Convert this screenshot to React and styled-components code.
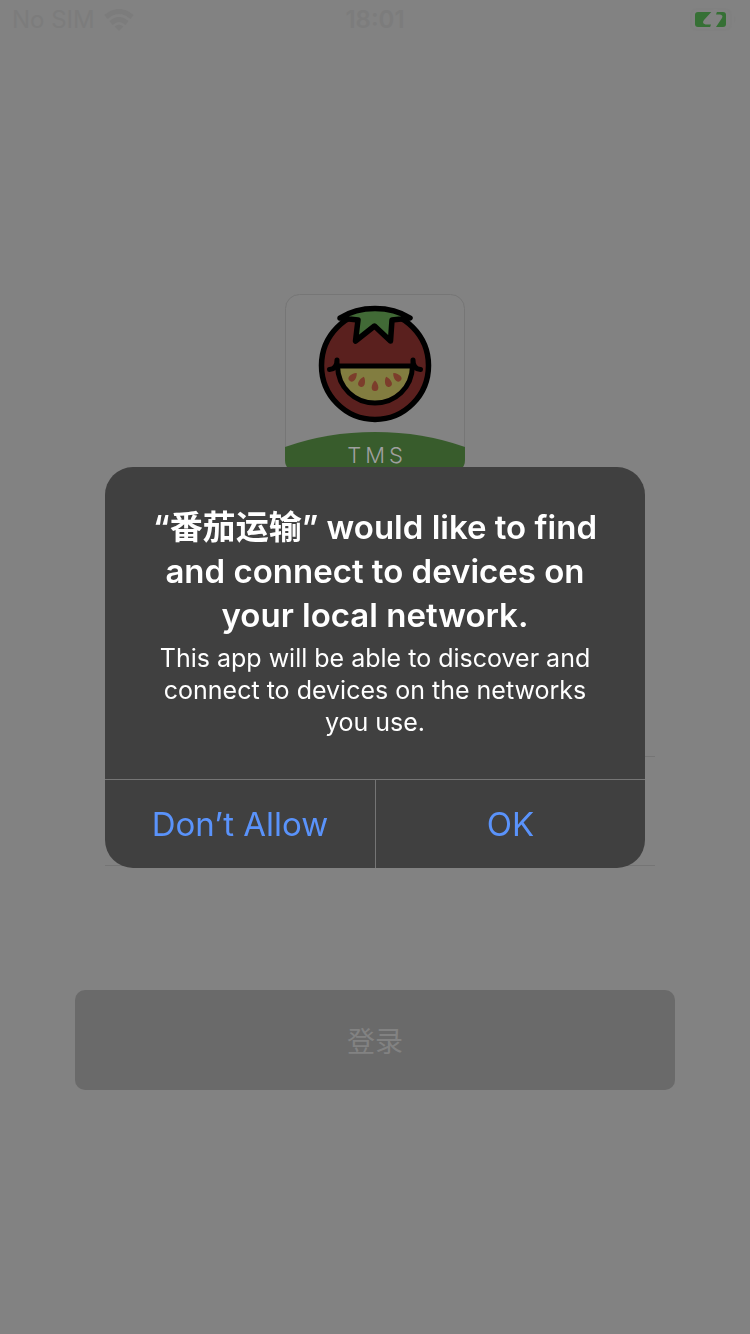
import React from "react";
import styled, { createGlobalStyle } from "styled-components";

const GlobalStyle = createGlobalStyle`
  *, *::before, *::after { box-sizing: border-box; }
  body {
    margin: 0;
    background: #828282;
    font-family: Inter, "Noto Sans CJK SC", sans-serif;
  }
`;

const Page = styled.div`
  min-height: 100vh;
  display: flex;
  flex-direction: column;
`;

const StatusBar = styled.header`
  display: grid;
  grid-template-columns: 1fr auto 1fr;
  align-items: center;
  height: 40px;
  padding: 0 12px;
  font-size: 24px;
  line-height: 40px;
  color: #7c7c7c;
`;

const Carrier = styled.div`
  display: flex;
  align-items: center;
  gap: 9px;
`;

const Clock = styled.time`
  font-weight: 600;
`;

const BatteryIcon = styled.svg`
  justify-self: end;
`;

const LoginScreen = styled.main`
  display: flex;
  flex-direction: column;
  align-items: center;
  padding: 254px 75px 0;
`;

const Logo = styled.svg`
  display: block;
  width: 180px;
  height: 180px;
`;

const LoginForm = styled.form`
  display: flex;
  flex-direction: column;
  width: 100%;
  padding-top: 174px;
`;

const Fields = styled.div`
  display: flex;
  flex-direction: column;
  margin: 0 20px 124px 30px;
`;

const Field = styled.input`
  width: 100%;
  height: 109px;
  padding: 0 20px;
  border: 0;
  border-bottom: 1px solid #757575;
  border-radius: 0;
  background: transparent;
  color: #404040;
  font: inherit;
  font-size: 28px;
`;

const LoginButton = styled.button`
  height: 100px;
  border: 0;
  border-radius: 10px;
  background: #6a6a6a;
  color: #828282;
  font-family: "Noto Sans CJK SC", sans-serif;
  font-size: 28px;
  font-weight: 400;
`;

const Overlay = styled.div`
  position: fixed;
  inset: 0;
  display: flex;
  align-items: center;
  justify-content: center;
`;

const Alert = styled.section`
  width: 540px;
  max-width: calc(100% - 40px);
  overflow: hidden;
  border-radius: 28px;
  background: #404040;
  color: #ffffff;
  text-align: center;
`;

const AlertBody = styled.div`
  display: flex;
  flex-direction: column;
  gap: 5px;
  padding: 38px 40px 41px;
`;

const AlertTitle = styled.h1`
  margin: 0;
  font-size: 33px;
  line-height: 44px;
  font-weight: 600;
`;

const AlertText = styled.p`
  margin: 0;
  font-size: 25px;
  line-height: 32px;
`;

const AlertActions = styled.div`
  display: grid;
  grid-template-columns: 1fr 1fr;
  border-top: 1px solid #757575;
`;

const AlertButton = styled.button`
  height: 88px;
  padding: 0;
  border: 0;
  background: transparent;
  color: #5a93fb;
  font-family: inherit;
  font-size: 33px;
  font-weight: 400;

  & + & {
    border-left: 1px solid #757575;
  }
`;

const seeds = [
  [68, 83, 42],
  [77, 88, 20],
  [90, 92, 0],
  [103, 88, -20],
  [112, 83, -42],
];

function TomatoLogo() {
  return (
    <Logo viewBox="0 0 180 180" role="img" aria-label="TMS">
      <defs>
        <clipPath id="card">
          <rect width="180" height="180" rx="14" />
        </clipPath>
      </defs>
      <rect x="0.5" y="0.5" width="179" height="179" rx="14" fill="#838383" stroke="#767676" />
      <g clipPath="url(#card)">
        <path d="M0 153Q42 138 90 138T180 153V180H0Z" fill="#385c2c" />
      </g>
      <g stroke="#000" strokeWidth="5.500" strokeLinecap="round" strokeLinejoin="round">
        <ellipse cx="90" cy="71.500" rx="53.500" ry="54" fill="#5a201e" />
        <path
          d="M55 24Q70 14.500 90 14.500T125 24L107 26L105.500 47L89.500 32L70.500 47L73 26Z"
          fill="#416a36"
        />
        <path d="M52.500 72H127.500C127 94 110 109 90 109S53 94 52.500 72Z" fill="#827d40" strokeWidth="5" />
        <path d="M44.500 75.500Q52 75 52 66V72M135.500 75.500Q128 75 128 66V72" fill="none" strokeWidth="5" />
      </g>
      {seeds.map(([x, y, angle]) => (
        <path
          key={x}
          d="M0 -5.500C2 -4 3.300 -.5 3.300 1.500A3.300 3.500 0 0 1 -3.300 1.500C-3.300 -.5 -2 -4 0 -5.500Z"
          transform={`translate(${x} ${y}) rotate(${angle})`}
          fill="#7c3d2b"
        />
      ))}
      <text x="92" y="169" textAnchor="middle" fontSize="22" fontWeight="300" letterSpacing="4" fill="#a0a0a0">
        TMS
      </text>
    </Logo>
  );
}

export default function App() {
  return (
    <>
      <GlobalStyle />
      <Page>
        <StatusBar>
          <Carrier>
            No SIM
            <svg width="30" height="22" viewBox="0 0 30 22" fill="none" stroke="#7c7c7c" strokeWidth="5">
              <path d="M2 8Q15 -3 28 8" />
              <path d="M7 14Q15 7 23 14" />
              <path d="M10.500 17.500Q15 14 19.500 17.500L15 22Z" fill="#7c7c7c" stroke="none" />
            </svg>
          </Carrier>
          <Clock>18:01</Clock>
          <BatteryIcon width="50" height="24" viewBox="0 0 50 24" role="img" aria-label="Charging">
            <rect x="3" y="1" width="40" height="21" rx="6" fill="none" stroke="#808080" strokeWidth="2" />
            <path d="M46 8Q49 11 46 15" fill="#808080" />
            <rect x="7" y="4" width="31" height="15" rx="3" fill="#367035" />
            <path
              d="M26 1H30L28 6.500H32Q35.500 7 34 10L26 22H21L23 16.500H17.500Q13.500 15.500 16 12Z"
              fill="#828282"
            />
          </BatteryIcon>
        </StatusBar>
        <LoginScreen>
          <TomatoLogo />
          <LoginForm onSubmit={(event) => event.preventDefault()}>
            <Fields>
              <Field type="text" aria-label="账号" autoComplete="username" />
              <Field type="password" aria-label="密码" autoComplete="current-password" />
            </Fields>
            <LoginButton type="submit">登录</LoginButton>
          </LoginForm>
        </LoginScreen>
      </Page>
      <Overlay>
        <Alert role="alertdialog" aria-modal="true" aria-labelledby="alert-title" aria-describedby="alert-text">
          <AlertBody>
            <AlertTitle id="alert-title">
              “番茄运输” would like to find and connect to devices on your local network.
            </AlertTitle>
            <AlertText id="alert-text">
              This app will be able to discover and connect to devices on the networks you use.
            </AlertText>
          </AlertBody>
          <AlertActions>
            <AlertButton type="button">Don’t Allow</AlertButton>
            <AlertButton type="button">OK</AlertButton>
          </AlertActions>
        </Alert>
      </Overlay>
    </>
  );
}
